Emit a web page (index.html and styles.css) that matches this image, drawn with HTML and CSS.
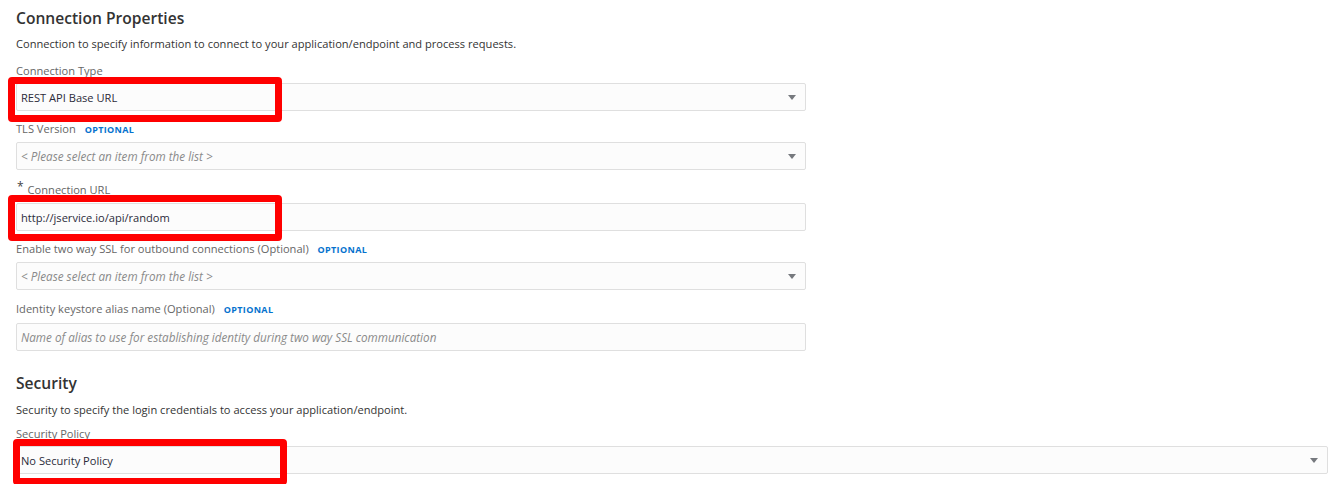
FILE: index.html
```html
<!DOCTYPE html>
<html lang="en">
<head>
<meta charset="utf-8">
<title>Connection Properties</title>
<link rel="stylesheet" href="styles.css">
</head>
<body>
<main class="page">
  <section class="section">
    <h2 class="section-title">Connection Properties</h2>
    <p class="section-desc">Connection to specify information to connect to your application/endpoint and process requests.</p>

    <div class="field">
      <label class="field-label">Connection Type</label>
      <div class="control select">
        <span class="value">REST API Base URL</span>
        <span class="caret"></span>
        <span class="highlight hl-type"></span>
      </div>
    </div>

    <div class="field">
      <label class="field-label">TLS Version <span class="optional">OPTIONAL</span></label>
      <div class="control select">
        <span class="placeholder">&lt; Please select an item from the list &gt;</span>
        <span class="caret"></span>
      </div>
    </div>

    <div class="field">
      <label class="field-label required"><span class="star">*</span>Connection URL</label>
      <div class="control">
        <span class="value">http://jservice.io/api/random</span>
        <span class="highlight hl-url"></span>
      </div>
    </div>

    <div class="field field-spaced">
      <label class="field-label">Enable two way SSL for outbound connections (Optional) <span class="optional">OPTIONAL</span></label>
      <div class="control select">
        <span class="placeholder">&lt; Please select an item from the list &gt;</span>
        <span class="caret"></span>
      </div>
    </div>

    <div class="field">
      <label class="field-label label-loose">Identity keystore alias name (Optional) <span class="optional">OPTIONAL</span></label>
      <div class="control">
        <span class="placeholder">Name of alias to use for establishing identity during two way SSL communication</span>
      </div>
    </div>
  </section>

  <section class="section section-security">
    <h2 class="section-title">Security</h2>
    <p class="section-desc desc-tight">Security to specify the login credentials to access your application/endpoint.</p>

    <div class="field field-wide">
      <label class="field-label">Security Policy</label>
      <div class="control select">
        <span class="value">No Security Policy</span>
        <span class="caret"></span>
        <span class="highlight hl-policy"></span>
      </div>
    </div>
  </section>
</main>
</body>
</html>
```

FILE: styles.css
```css
html, body {
  margin: 0;
  padding: 0;
  background: #ffffff;
}

body {
  font-family: "Open Sans", "Noto Sans", sans-serif;
  color: #333333;
}

.page {
  padding: 7px 0 0 16px;
}

.section {
  width: 790px;
}

.section-security {
  width: 1312px;
  margin-top: 21px;
}

.section-title {
  margin: 0;
  font-size: 15.6px;
  line-height: 22px;
  font-weight: 600;
  color: #333333;
}

.section-desc {
  margin: 7px 0 11px;
  font-size: 11.1px;
  line-height: 16px;
  color: #333333;
}

.desc-tight {
  margin: 8px 0 8px;
}

.field {
  margin-bottom: 10px;
}

.field-spaced {
  margin-bottom: 11px;
}

.field-label {
  display: block;
  margin-bottom: 4px;
  font-size: 11.1px;
  line-height: 16px;
  color: #666666;
}

.field-label.required {
  line-height: 19px;
}

.label-loose {
  margin-bottom: 5px;
}

.star {
  display: inline-block;
  vertical-align: top;
  margin: 0 4px 0 1px;
  font-size: 12px;
  line-height: 14px;
  color: #444444;
}

.optional {
  margin-left: 6px;
  font-size: 9px;
  font-weight: 700;
  letter-spacing: 0.35px;
  color: #0572ce;
}

.control {
  position: relative;
  box-sizing: border-box;
  height: 28px;
  display: flex;
  align-items: center;
  padding: 0 5px 0 4px;
  background: #fcfcfc;
  border: 1px solid #dfdfdf;
  border-radius: 2px;
  font-size: 11.1px;
}

.value {
  color: #2b2b3a;
}

.placeholder {
  color: #8a8a8a;
  font-style: italic;
  font-size: 11.7px;
}

.caret {
  margin-left: auto;
  margin-right: 4px;
  width: 0;
  height: 0;
  border-left: 4px solid transparent;
  border-right: 4px solid transparent;
  border-top: 5px solid #76797e;
}

/* Red annotation frames drawn over the chosen fields */
.highlight {
  position: absolute;
  box-sizing: border-box;
  border: 7px solid #ff0000;
  border-radius: 4px;
  pointer-events: none;
}

.hl-type {
  left: -9px;
  top: -7px;
  width: 274px;
  height: 45px;
}

.hl-url {
  left: -9px;
  top: -9px;
  width: 274px;
  height: 46px;
}

.hl-policy {
  left: -4px;
  top: -8px;
  width: 274px;
  height: 46px;
}
```
